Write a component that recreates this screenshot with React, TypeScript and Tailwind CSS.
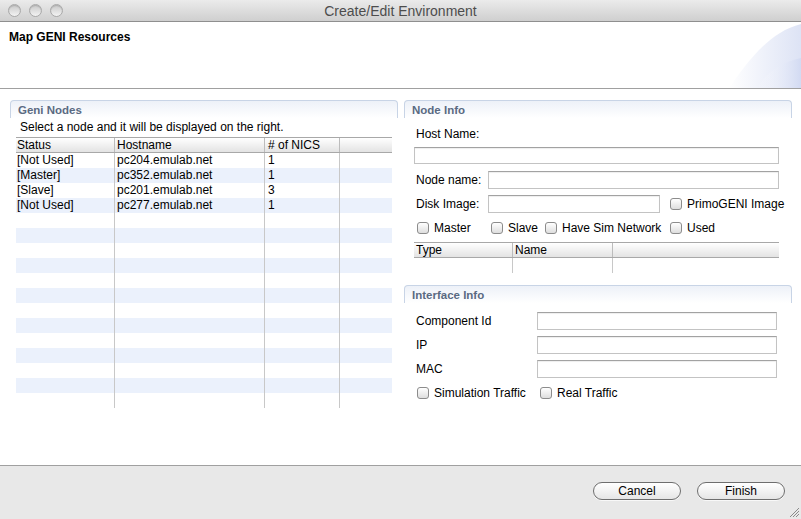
import React from "react";

const GroupHeader = ({ title }: { title: string }) => (
  <div className="h-[18px] rounded-t-[4px] border border-b-0 border-[#c8d4e6] bg-gradient-to-b from-[#edf1f8] to-white pl-[7px] text-[11.5px] font-bold leading-[18px] text-[#5a6a82]">
    {title}
  </div>
);

const Checkbox = ({ label, className = "" }: { label: string; className?: string }) => (
  <div className={"flex items-center " + className}>
    <span className="inline-block h-[12px] w-[12px] rounded-[3px] border border-[#8c8c8c] bg-gradient-to-b from-white to-[#dedede] shadow-[0_1px_0_rgba(255,255,255,0.8)]" />
    <span className="ml-[5px] whitespace-nowrap">{label}</span>
  </div>
);

const Field = ({ className = "" }: { className?: string }) => (
  <div className={"border border-[#c3c3c3] border-t-[#a2a2a2] bg-white shadow-[inset_0_1px_1px_rgba(0,0,0,0.07)] " + className} />
);

const nodes = [
  { status: "[Not Used]", host: "pc204.emulab.net", nics: "1" },
  { status: "[Master]", host: "pc352.emulab.net", nics: "1" },
  { status: "[Slave]", host: "pc201.emulab.net", nics: "3" },
  { status: "[Not Used]", host: "pc277.emulab.net", nics: "1" },
];

const NodesTable = () => {
  const rows = Array.from({ length: 17 }, (_, i) => nodes[i] ?? null);
  return (
    <div className="ml-[6px] w-[376px]">
      <div className="flex h-[16px] border-y border-[#a8a8a8] bg-gradient-to-b from-white to-[#e3e3e3] leading-[14px]">
        <div className="w-[99px] border-r border-[#bcbcbc] pl-[1px]">Status</div>
        <div className="w-[150px] border-r border-[#bcbcbc] pl-[2px]">Hostname</div>
        <div className="w-[75px] border-r border-[#bcbcbc] pl-[3px]">{"# of NICS"}</div>
        <div className="flex-1" />
      </div>
      {rows.map((r, i) => (
        <div
          key={i}
          className={"flex h-[15px] leading-[15px] " + (i % 2 === 1 ? "bg-[#ebf1fc]" : "bg-white")}
        >
          <div className="w-[99px] border-r border-[#c8c8c8] pl-[1px]">{r?.status}</div>
          <div className="w-[150px] border-r border-[#c8c8c8] pl-[2px]">{r?.host}</div>
          <div className="w-[75px] border-r border-[#c8c8c8] pl-[3px]">{r?.nics}</div>
          <div className="flex-1" />
        </div>
      ))}
    </div>
  );
};

const TrafficLight = () => (
  <span className="inline-block h-[13px] w-[13px] rounded-full border border-[#a9a9a9] bg-gradient-to-b from-[#c9c9c9] to-[#f3f3f3] shadow-[inset_0_1px_1px_rgba(0,0,0,0.15)]" />
);

const App = () => {
  return (
    <div className="flex h-[519px] w-[801px] flex-col overflow-hidden bg-white font-['Liberation_Sans',Arial,sans-serif] text-[12px] text-black">
      {/* title bar */}
      <div className="relative flex h-[22px] items-center border-b border-[#8f8f8f] bg-gradient-to-b from-[#ebebeb] to-[#cfcfcf]">
        <div className="flex gap-[8px] pl-[8px]">
          <TrafficLight />
          <TrafficLight />
          <TrafficLight />
        </div>
        <div className="absolute inset-x-0 top-0 text-center text-[14px] leading-[22px] text-[#4d4d4d]">
          Create/Edit Environment
        </div>
      </div>

      {/* banner */}
      <div className="relative flex h-[67px] border-b border-[#a0a0a0] bg-white">
        <div className="pl-[9px] pt-[8px] text-[12px] font-bold leading-[15px]">Map GENI Resources</div>
        <svg className="absolute right-0 top-0" width="72" height="66" viewBox="0 0 72 66">
          <defs>
            <linearGradient id="sw" x1="0" y1="0" x2="1" y2="0">
              <stop offset="0" stopColor="#ffffff" />
              <stop offset="1" stopColor="#dde3f5" />
            </linearGradient>
            <linearGradient id="sw2" x1="0" y1="0" x2="1" y2="0">
              <stop offset="0" stopColor="#ffffff" stopOpacity="0" />
              <stop offset="1" stopColor="#d2daf2" />
            </linearGradient>
          </defs>
          <path d="M0 66 C 18 40, 40 10, 72 2 L72 66 Z" fill="url(#sw)" />
          <path d="M28 66 C 36 52, 52 40, 72 36 L72 66 Z" fill="url(#sw2)" />
        </svg>
      </div>

      {/* content */}
      <div className="flex flex-1 gap-[6px] pl-[10px] pt-[11px]">
        {/* left */}
        <div className="w-[388px]">
          <GroupHeader title="Geni Nodes" />
          <div className="mt-[2px] h-[15px] pl-[10px] leading-[15px]">
            Select a node and it will be displayed on the right.
          </div>
          <div className="mt-[2px]">
            <NodesTable />
          </div>
        </div>

        {/* right */}
        <div className="w-[388px]">
          <GroupHeader title="Node Info" />
          <div className="mt-[8px] h-[16px] pl-[12px] leading-[16px]">Host Name:</div>
          <Field className="ml-[10px] mt-[5px] h-[17px] w-[365px]" />
          <div className="ml-[10px] mt-[7px] flex h-[18px] items-center">
            <div className="w-[74px] pl-[2px]">Node name:</div>
            <Field className="h-[18px] w-[291px]" />
          </div>
          <div className="ml-[10px] mt-[6px] flex h-[18px] items-center">
            <div className="w-[74px] pl-[2px]">Disk Image:</div>
            <Field className="h-[18px] w-[172px]" />
            <Checkbox label="PrimoGENI Image" className="ml-[10px]" />
          </div>
          <div className="ml-[13px] mt-[7px] flex h-[16px] items-center">
            <Checkbox label="Master" className="w-[74px]" />
            <Checkbox label="Slave" className="w-[54px]" />
            <Checkbox label="Have Sim Network" className="w-[125px]" />
            <Checkbox label="Used" />
          </div>
          <div className="ml-[10px] mt-[6px] w-[365px]">
            <div className="flex h-[16px] border-y border-[#a8a8a8] bg-gradient-to-b from-white to-[#e3e3e3] leading-[14px]">
              <div className="w-[99px] border-r border-[#bcbcbc] pl-[2px]">Type</div>
              <div className="w-[100px] border-r border-[#bcbcbc] pl-[2px]">Name</div>
              <div className="flex-1" />
            </div>
            <div className="flex h-[15px]">
              <div className="w-[99px] border-r border-[#c8c8c8]" />
              <div className="w-[100px] border-r border-[#c8c8c8]" />
              <div className="flex-1" />
            </div>
          </div>

          <div className="mt-[12px]">
            <GroupHeader title="Interface Info" />
          </div>
          {["Component Id", "IP", "MAC"].map((l, i) => (
            <div key={l} className={"ml-[12px] flex h-[18px] items-center " + (i === 0 ? "mt-[9px]" : "mt-[6px]")}>
              <div className="w-[121px]">{l}</div>
              <Field className="h-[18px] w-[240px]" />
            </div>
          ))}
          <div className="ml-[13px] mt-[7px] flex h-[16px] items-center">
            <Checkbox label="Simulation Traffic" className="w-[123px]" />
            <Checkbox label="Real Traffic" />
          </div>
        </div>
      </div>

      {/* footer */}
      <div className="relative flex h-[54px] justify-end gap-[16px] border-t border-[#a0a0a0] bg-[#e8e8e8] pr-[16px] pt-[16px]">
        {["Cancel", "Finish"].map((b) => (
          <div
            key={b}
            className="flex h-[18px] w-[88px] items-center justify-center rounded-full border border-[#6e6e6e] bg-gradient-to-b from-white to-[#e6e6e6] text-[12px] shadow-[0_1px_0_rgba(255,255,255,0.7)]"
          >
            {b}
          </div>
        ))}
        <svg className="absolute bottom-[1px] right-[1px]" width="12" height="12" viewBox="0 0 12 12">
          <path d="M2 11 L11 2 M5 11 L11 5 M8 11 L11 8" stroke="#8a8a8a" strokeWidth="1" />
        </svg>
      </div>
    </div>
  );
};

export default App;
